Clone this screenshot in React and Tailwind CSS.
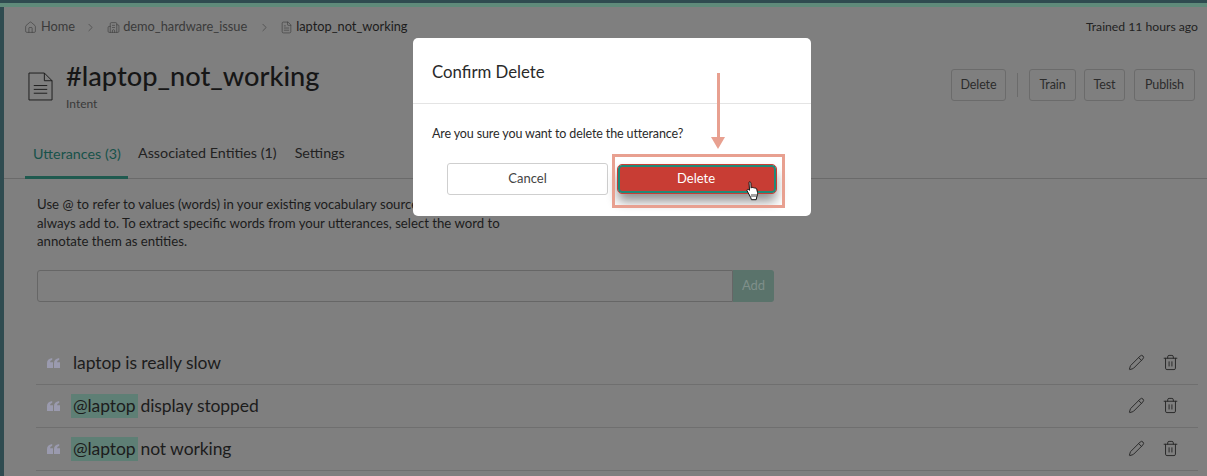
import { Home, ChevronRight, Building2, FileText, Pencil, Trash2 } from 'lucide-react'

const font = { fontFamily: '"Lato", "Noto Sans", sans-serif' }

function HeaderButton({ label, width }) {
  return (
    <button className={`h-[32px] ${width} border border-[#6b6b6b] rounded-[3px] pt-[1px] text-[12.5px] tracking-[-0.01em] text-[#2c2c2c]`}>
      {label}
    </button>
  )
}

function QuoteIcon() {
  return (
    <svg width="13" height="10" viewBox="0 0 13 10" className="shrink-0">
      <path d="M0 10V5.2C0 2.4 1.5.7 5.2 0v2.1C3.8 2.5 3.2 3.2 3.1 4.2H6V10zM7 10V5.2C7 2.4 8.5.7 12.2 0v2.1c-1.4.4-2 1.1-2.1 2.1H13V10z" fill="#9a9aae" />
    </svg>
  )
}

function UtteranceRow({ entity, text }) {
  return (
    <div className="h-[43px] border-b border-[#6f6f6f] flex items-center pl-[11px] pr-[19px] ml-[32px] mr-[9px] pt-[1px]">
      <QuoteIcon />
      <div className={`text-[17.5px] tracking-[-0.005em] text-[#1c1c1c] flex items-center ${entity ? 'ml-[11px]' : 'ml-[13px]'}`}>
        {entity && <span className="bg-[#5e7f75] px-[2px] h-[24px] leading-[24px] mr-[3px]">@laptop</span>}
        {text}
      </div>
      <div className="ml-auto flex items-center gap-[17px] text-[#2a2a2a] -mt-[2px]">
        <Pencil size={17} strokeWidth={1.4} />
        <Trash2 size={17} strokeWidth={1.4} />
      </div>
    </div>
  )
}

function HandCursor() {
  return (
    <svg width="15" height="20" viewBox="0 0 15 20">
      <path d="M4 1.2c.8-.6 1.8-.1 1.9.9l.2 5 .5-.5c.6-.4 1.3-.2 1.6.3.6-.4 1.4-.2 1.7.4.7-.4 1.5-.1 1.8.6l.8 3.6c.3 1.6 0 3-.7 4.3l-.6 2.9H6.4l-.6-2L2.2 10c-.7-.9.2-2.1 1.3-1.5l1 .8z" fill="#fff" stroke="#111" strokeWidth="1" strokeLinejoin="round" />
      <path d="M7 13v3M9 13v3M11 13v3" stroke="#111" strokeWidth=".8" />
    </svg>
  )
}

export default function App() {
  return (
    <div className="relative w-[1207px] h-[476px] overflow-hidden bg-[#7f7f7f] flex flex-col" style={font}>
      {/* Top strips */}
      <div className="h-[3px] bg-[#2f4b50] shrink-0" />
      <div className="h-[4px] bg-[#5f8a7a] shrink-0" />

      <div className="flex flex-1 min-h-0">
        <div className="w-[4px] bg-[#2f4b50] shrink-0" />

        <div className="flex-1 min-w-0">
          {/* Breadcrumb */}
          <div className="h-[38px] flex items-center pt-[2px] pl-[20px] pr-[9px] text-[12.8px] text-[#3a3a3a]">
            <Home size={13} strokeWidth={1.1} className="text-[#3a3a3a]" />
            <span className="ml-[4px]">Home</span>
            <ChevronRight size={13} strokeWidth={1.1} className="ml-[9px] text-[#3a3a3a]" />
            <Building2 size={13} strokeWidth={1.1} className="ml-[10px] text-[#3a3a3a]" />
            <span className="ml-[3px]">demo_hardware_issue</span>
            <ChevronRight size={13} strokeWidth={1.1} className="ml-[11px] text-[#3a3a3a]" />
            <FileText size={13} strokeWidth={1.1} className="ml-[9px] text-[#3a3a3a]" />
            <span className="ml-[3px] text-[#1c1c1c]">laptop_not_working</span>
            <span className="ml-auto text-[12.2px] text-[#222]">Trained 11 hours ago</span>
          </div>

          {/* Title row */}
          <div className="h-[69px] flex pl-[24px] pr-[12px]">
            <svg width="25" height="29" viewBox="0 0 26 30" className="mt-[27px] shrink-0">
              <path d="M1 1h16l8 8v20H1z M17 1v8h8 M6 14h14M6 18h14M6 22h14" fill="none" stroke="#1c1c1c" strokeWidth="1" />
            </svg>
            <div className="ml-[13px] pt-[13px]">
              <h1 className="text-[27.2px] leading-[36px] font-medium text-[#161616]">#laptop_not_working</h1>
              <p className="text-[12px] leading-[15px] text-[#3a3a3a] mt-[2px]">Intent</p>
            </div>
            <div className="ml-auto flex items-center self-start mt-[24px]">
              <HeaderButton label="Delete" width="w-[55px]" />
              <div className="w-px h-[24px] bg-[#6b6b6b] mx-[11px]" />
              <HeaderButton label="Train" width="w-[47px]" />
              <div className="w-[8px]" />
              <HeaderButton label="Test" width="w-[41px]" />
              <div className="w-[9px]" />
              <HeaderButton label="Publish" width="w-[61px]" />
            </div>
          </div>

          {/* Tabs */}
          <div className="h-[65px] flex items-end border-b border-[#6a6a6a] pl-[21px] text-[14.3px] text-[#222] whitespace-nowrap">
            <div className="w-[103px] h-[50px] pl-[8px] pt-[14px] border-b-[3px] border-[#1f5a4f] -mb-px text-[#17524a]">Utterances (3)</div>
            <div className="ml-[10px] h-[50px] pt-[14px]">Associated Entities (1)</div>
            <div className="ml-[18px] h-[50px] pt-[14px]">Settings</div>
          </div>

          {/* Help text */}
          <p className="ml-[33px] mt-[16px] w-[480px] text-[13.2px] leading-[18.5px] text-[#1c1c1c]">
            Use @ to refer to values (words) in your existing vocabulary sources that you always add to. To extract specific words from your utterances, select the word to annotate them as entities.
          </p>

          {/* Add utterance */}
          <div className="ml-[33px] mt-[19px] w-[737px] h-[32px] flex">
            <div className="flex-1 border border-[#666] rounded-l-[3px]" />
            <div className="w-[41px] bg-[#5a736b] rounded-r-[3px] text-[13px] text-[#7f8f8a] flex items-center justify-center">Add</div>
          </div>

          {/* Utterances */}
          <div className="mt-[40px]">
            <UtteranceRow text="laptop is really slow" />
            <UtteranceRow entity text="display stopped" />
            <UtteranceRow entity text="not working" />
          </div>
        </div>
      </div>

      {/* Confirm modal */}
      <div className="absolute left-[413px] top-[38px] w-[398px] h-[178px] bg-white rounded-[5px] text-[#2a2a2a]">
        <div className="h-[66px] border-b border-[#e4e4e4] pl-[19px] pt-[22px] text-[16.8px] leading-[24px]">Confirm Delete</div>
        <p className="pl-[19px] pt-[20px] text-[12.5px] tracking-[-0.01em] leading-[20px]">Are you sure you want to delete the utterance?</p>
        <div className="flex items-center pl-[34px] mt-[19px]">
          <button className="w-[161px] h-[32px] border border-[#cfcfcf] rounded-[3px] text-[13px] text-[#444]">Cancel</button>
          <button className="ml-[10px] w-[158px] h-[28px] bg-[#c83d34] rounded-[4px] border-2 border-[#1f8a78] outline-1 outline-offset-0 outline-[#c83d34] text-[13px] pb-[1px] pr-[2px] text-white shadow-[0_8px_12px_rgba(0,0,0,0.45)]">Delete</button>
        </div>
      </div>

      {/* Annotation */}
      <div className="absolute left-[612px] top-[154px] w-[173px] h-[54px] border-[3px] border-[#e8a090]" />
      <div className="absolute left-[717px] top-[73px] w-[3px] h-[64px] bg-[#e8a090]" />
      <div className="absolute left-[711px] top-[137px] w-0 h-0 border-x-[7.5px] border-x-transparent border-t-[12px] border-t-[#e8a090]" />
      <div className="absolute left-[745px] top-[181px]">
        <HandCursor />
      </div>
    </div>
  )
}
